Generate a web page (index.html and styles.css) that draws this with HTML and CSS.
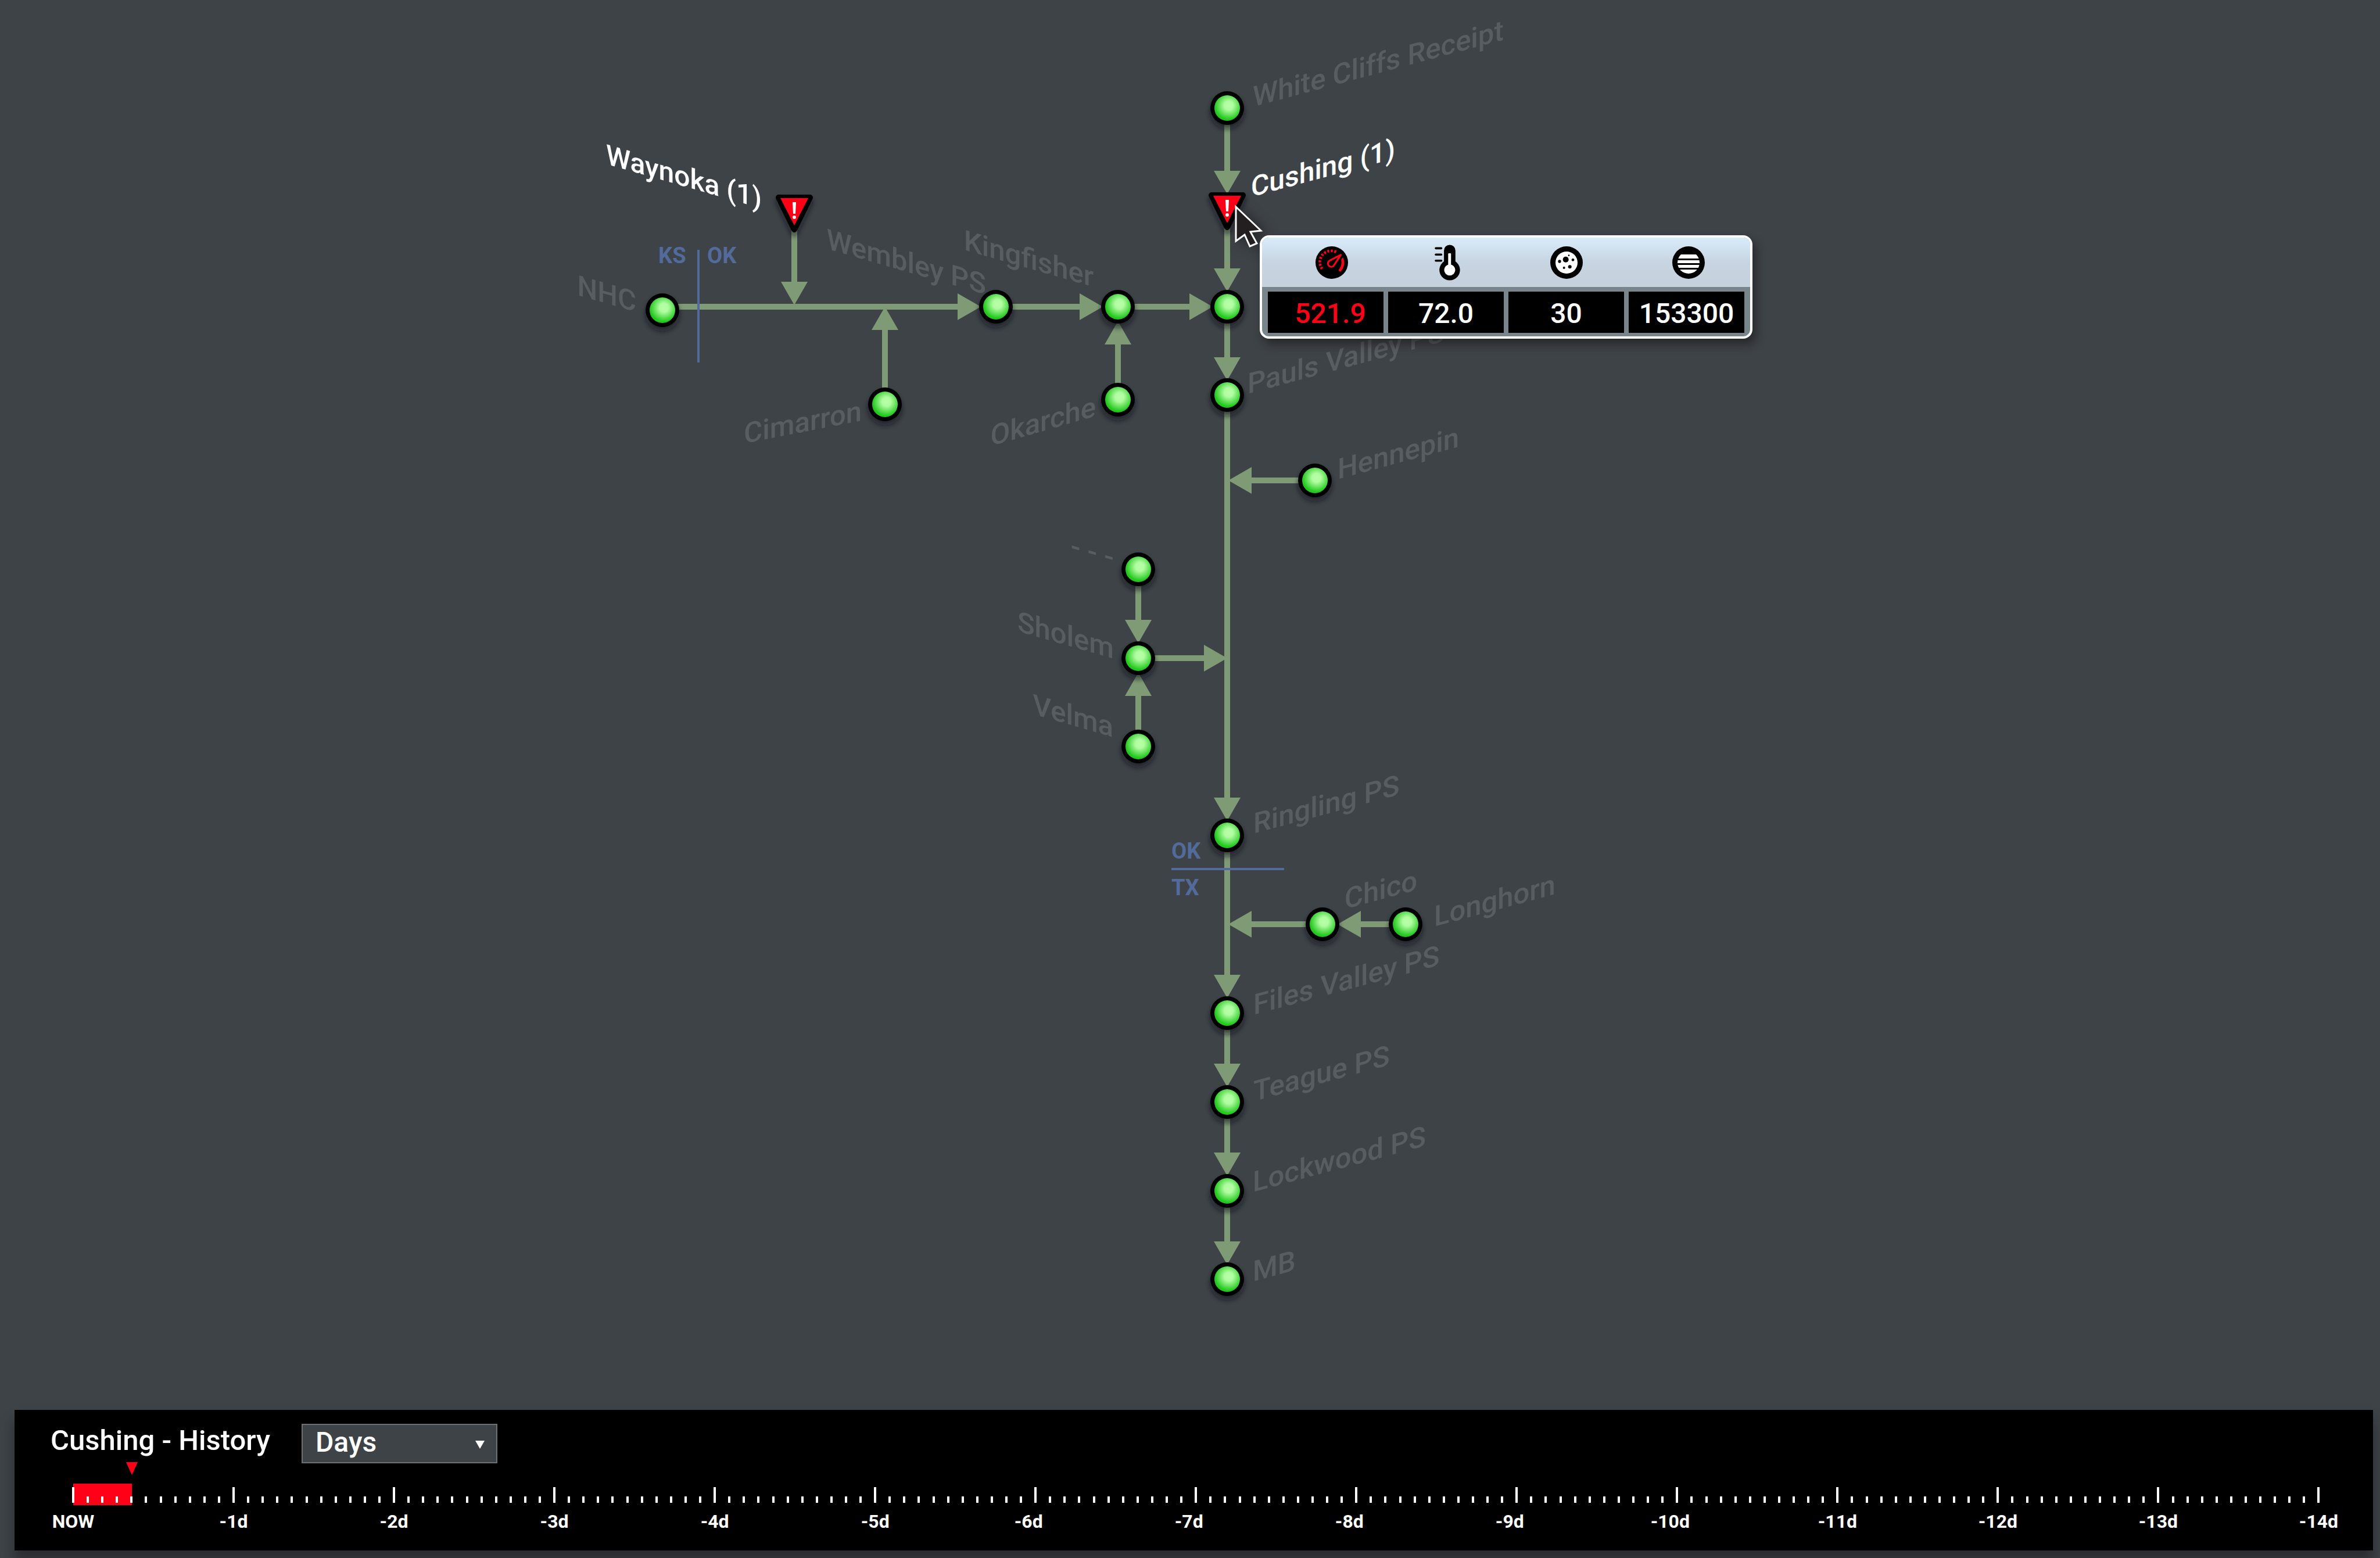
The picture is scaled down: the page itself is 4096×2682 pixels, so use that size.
FILE: index.html
```
<!DOCTYPE html>
<html lang="en">
<head>
<meta charset="utf-8">
<title>Pipeline overview</title>
<link rel="stylesheet" href="styles.css">
</head>
<body>
<main class="stage">
  <svg class="network" viewBox="0 0 4096 2427" role="img" aria-label="Pipeline network">
    <defs>
      <radialGradient id="glow" cx="0.56" cy="0.4" r="0.58">
        <stop offset="0" stop-color="#b8ffa8"/>
        <stop offset="0.3" stop-color="#b0fca0"/>
        <stop offset="0.95" stop-color="#20c81c"/>
      </radialGradient>
      <filter id="shade" x="-50%" y="-50%" width="200%" height="200%">
        <feDropShadow dx="0" dy="7" stdDeviation="5" flood-color="#15131a" flood-opacity="0.65"/>
      </filter>
      <path id="arrow" d="M-23 0H23L0 40Z"/>
      <g id="station" filter="url(#shade)">
        <circle r="29"/>
        <circle r="22" fill="url(#glow)"/>
      </g>
      <g id="alarm" filter="url(#shade)">
        <path class="alarm-edge" d="M-27 5H27L0 60Z"/>
        <path class="alarm-face" d="M-24 6H24L0 53Z"/>
        <path class="alarm-mark" d="M-3 13H3L2 33H-2Z"/>
        <circle class="alarm-mark" cy="39" r="3"/>
      </g>
    </defs>

    <g class="pipes">
      <path d="M2112 186V294M2112 390V462M2112 528V615M2112 680V1373M2112 1438V1678M2112 1744V1831M2112 1897V1984M2112 2050V2137"/>
      <path d="M1140 528H1649M1714 528H1859M1924 528H2048"/>
      <path d="M1367 390V486M1523 696V567M1924 688V592"/>
      <path d="M2263 827H2151M1959 980V1068M1959 1285V1197M1959 1133H2073M2276 1591H2151M2419 1591H2341"/>
    </g>
    <g class="arrows">
      <use href="#arrow" x="2112" y="294"/>
      <use href="#arrow" x="2112" y="462"/>
      <use href="#arrow" x="2112" y="615"/>
      <use href="#arrow" x="2112" y="1373"/>
      <use href="#arrow" x="2112" y="1678"/>
      <use href="#arrow" x="2112" y="1831"/>
      <use href="#arrow" x="2112" y="1984"/>
      <use href="#arrow" x="2112" y="2137"/>
      <use href="#arrow" x="1367" y="485"/>
      <use href="#arrow" x="1959" y="1067"/>
      <use href="#arrow" transform="translate(1648 528) rotate(-90)"/>
      <use href="#arrow" transform="translate(1858 528) rotate(-90)"/>
      <use href="#arrow" transform="translate(2047 528) rotate(-90)"/>
      <use href="#arrow" transform="translate(2072 1133) rotate(-90)"/>
      <use href="#arrow" transform="translate(1523 568) rotate(180)"/>
      <use href="#arrow" transform="translate(1924 593) rotate(180)"/>
      <use href="#arrow" transform="translate(1959 1198) rotate(180)"/>
      <use href="#arrow" transform="translate(2154 827) rotate(90)"/>
      <use href="#arrow" transform="translate(2154 1591) rotate(90)"/>
      <use href="#arrow" transform="translate(2342 1591) rotate(90)"/>
    </g>

    <g class="borders">
      <path d="M1202 430V624M2016 1496H2210"/>
      <text x="1133" y="453">KS</text>
      <text x="1217" y="453">OK</text>
      <text x="2016" y="1478">OK</text>
      <text x="2016" y="1541">TX</text>
    </g>

    <g class="names">
      <text transform="translate(2156 184) skewY(-15)">White Cliffs Receipt</text>
      <text class="active" transform="translate(2153 339) skewY(-15)">Cushing (1)</text>
      <text transform="translate(2147 678) skewY(-15)">Pauls Valley PS</text>
      <text transform="translate(2302 825) skewY(-15)">Hennepin</text>
      <text transform="translate(2157 1435) skewY(-15)">Ringling PS</text>
      <text transform="translate(2314 1565) skewY(-15)">Chico</text>
      <text transform="translate(2468 1595) skewY(-15)">Longhorn</text>
      <text transform="translate(2157 1747) skewY(-15)">Files Valley PS</text>
      <text transform="translate(2157 1896) skewY(-15)">Teague PS</text>
      <text transform="translate(2156 2052) skewY(-15)">Lockwood PS</text>
      <text transform="translate(2156 2206) skewY(-15)">MB</text>
    </g>
    <g class="names names-left">
      <text class="active" transform="translate(1311 359) skewY(16)">Waynoka (1)</text>
      <text transform="translate(1095 537) skewY(16)">NHC</text>
      <text transform="translate(1697 507) skewY(16)">Wembley PS</text>
      <text transform="translate(1882 494) skewY(16)">Kingfisher</text>
      <text transform="translate(1483 724) skewY(-11)">Cimarron</text>
      <text transform="translate(1886 716) skewY(-16)">Okarche</text>
      <text transform="translate(1917 977) skewY(16)">- - -</text>
      <text transform="translate(1917 1134) skewY(16)">Sholem</text>
      <text transform="translate(1916 1269) skewY(16)">Velma</text>
    </g>

    <g>
      <use href="#station" x="2112" y="186"/>
      <use href="#station" x="2112" y="528"/>
      <use href="#station" x="2112" y="680"/>
      <use href="#station" x="2112" y="1438"/>
      <use href="#station" x="2112" y="1744"/>
      <use href="#station" x="2112" y="1897"/>
      <use href="#station" x="2112" y="2050"/>
      <use href="#station" x="2112" y="2202"/>
      <use href="#station" x="1140" y="534"/>
      <use href="#station" x="1714" y="528"/>
      <use href="#station" x="1924" y="528"/>
      <use href="#station" x="1523" y="696"/>
      <use href="#station" x="1924" y="688"/>
      <use href="#station" x="2263" y="827"/>
      <use href="#station" x="1959" y="980"/>
      <use href="#station" x="1959" y="1133"/>
      <use href="#station" x="1959" y="1285"/>
      <use href="#station" x="2276" y="1591"/>
      <use href="#station" x="2419" y="1591"/>
      <use href="#alarm" x="1367" y="335"/>
      <use href="#alarm" x="2112" y="331"/>
    </g>

    <path class="pointer" d="M2127 356L2170 397L2152 399L2163 419L2151 424L2142 404L2127 415Z"/>
  </svg>

  <table class="readings">
    <thead>
      <tr>
        <th scope="col">
          <svg class="icon" viewBox="61 57 168 168" role="img" aria-label="Pressure">
            <circle cx="145" cy="141" r="84"/>
            <path class="dial-ticks" d="M95 173A58 58 0 0 1 172 89"/>
            <path class="dial-needle" d="M192 101L158 152A17 17 0 1 1 134 131Z"/>
            <path class="dial-range" d="M199 117Q203 115 206 121Q217 160 190 189L179 181Q200 156 194 126Z"/>
          </svg>
        </th>
        <th scope="col">
          <svg class="icon icon-tall" viewBox="682 47 134 188" role="img" aria-label="Temperature">
            <path d="M731 78a30 30 0 0 1 60 0v57a54 54 0 1 1-60 0z"/>
            <path class="scale" d="M688 66H717M688 99H717M688 131H717"/>
            <circle class="pale" cx="761" cy="180" r="29"/>
            <rect class="pale" x="753" y="92" width="15" height="70" rx="4"/>
          </svg>
        </th>
        <th scope="col">
          <svg class="icon" viewBox="49 57 168 168" role="img" aria-label="Particles">
            <circle cx="133" cy="141" r="84"/>
            <circle class="pale" cx="133" cy="141" r="57"/>
            <circle cx="129" cy="125" r="15"/>
            <circle cx="97" cy="135" r="8"/>
            <circle cx="166" cy="127" r="7"/>
            <circle cx="145" cy="104" r="4"/>
            <circle cx="150" cy="163" r="9"/>
            <circle cx="120" cy="168" r="6"/>
          </svg>
        </th>
        <th scope="col">
          <svg class="icon" viewBox="691 57 168 168" role="img" aria-label="Volume">
            <clipPath id="tank"><circle cx="775" cy="141" r="57"/></clipPath>
            <circle cx="775" cy="141" r="84"/>
            <path class="pale" clip-path="url(#tank)" d="M715 99h120v21H715zM715 129h120v15H715zM715 153h120v15H715zM715 177h120v24H715z"/>
          </svg>
        </th>
      </tr>
    </thead>
    <tbody>
      <tr>
        <td><span class="value value-alert">521.9</span></td>
        <td><span class="value">72.0</span></td>
        <td><span class="value">30</span></td>
        <td><span class="value">153300</span></td>
      </tr>
    </tbody>
  </table>
</main>

<section class="history">
  <header class="history-head">
    <h1><label for="unit">Cushing - History</label></h1>
    <div class="picker">
      <select id="unit">
        <option>Days</option>
        <option>Hours</option>
        <option>Weeks</option>
      </select>
    </div>
  </header>
  <div class="timeline">
    <div class="range"></div>
    <ol class="ruler" id="ruler"></ol>
  </div>
</section>
<script src="timeline.js"></script>
</body>
</html>
```
FILE: styles.css
```
* {
  box-sizing: border-box;
}

body {
  display: flex;
  flex-direction: column;
  min-height: 100vh;
  margin: 0;
  background: #3e4347;
  color: #fff;
  font-family: Roboto, "Liberation Sans", sans-serif;
  font-weight: 500;
}

/* Network diagram */

.stage {
  position: relative;
  flex: 1;
}

.network {
  display: block;
  width: 100%;
  height: auto;
}

.pipes {
  fill: none;
  stroke: #7f9b75;
  stroke-width: 10px;
}

.arrows {
  fill: #7f9b75;
}

.borders {
  fill: #526b9b;
  font-size: 38px;
  font-weight: 700;
}

.borders path {
  stroke: #526b9b;
  stroke-width: 4px;
}

.names {
  fill: #575d61;
  font-size: 49px;
}

.names-left {
  text-anchor: end;
}

.active {
  fill: #fff;
  font-size: 48px;
}

.alarm-edge {
  stroke: #000;
  stroke-width: 10px;
  stroke-linejoin: round;
}

.alarm-face {
  fill: #ff0016;
}

.alarm-mark {
  fill: #fff;
}

.pointer {
  fill: #231f20;
  stroke: #fff;
  stroke-width: 3px;
  filter: drop-shadow(8px 4px 10px rgba(20, 18, 24, 0.6));
}

/* Station readings */

.readings {
  position: absolute;
  left: 52.93%;
  top: 16.69%;
  overflow: hidden;
  border: 4px solid #fff;
  border-radius: 16px;
  border-spacing: 0;
  background: #78868b;
  box-shadow: 6px 10px 16px rgba(20, 18, 24, 0.55);
}

.readings thead {
  background: linear-gradient(#d9ecfa, #c7d4e1 50%, #c5d1dc);
}

.readings th {
  height: 85px;
  padding: 0;
  vertical-align: middle;
}

.readings th:first-child {
  padding-left: 26px;
}

.readings th:nth-child(2) {
  padding-left: 4px;
}

.readings td {
  padding: 8px 4px 6px;
}

.readings td:first-child {
  padding-left: 10px;
}

.readings td:last-child {
  padding-right: 10px;
}

.value {
  display: block;
  width: 199px;
  padding-top: 5px;
  background: #000;
  font-size: 48px;
  line-height: 66px;
  text-align: center;
}

.value-alert {
  padding-left: 16px;
  color: #ff0016;
}

.icon {
  display: block;
  width: 56px;
  height: 56px;
  margin: 0 auto;
}

.icon-tall {
  width: 44px;
  height: 62px;
}

.pale {
  fill: #fff;
}

.scale {
  stroke: #000;
  stroke-width: 11px;
  stroke-linecap: round;
}

.dial-ticks {
  fill: none;
  stroke: #ff0016;
  stroke-width: 14px;
  stroke-dasharray: 10 8;
}

.dial-needle {
  fill: none;
  stroke: #ff0016;
  stroke-width: 9px;
  stroke-linejoin: round;
}

.dial-range {
  fill: #ff0016;
}

/* History timeline */

.history {
  margin: 0 12px 13px 25px;
  padding: 24px 91px 30px 62px;
  background: #000;
  box-shadow: 0 20px 20px rgba(24, 22, 28, 0.5);
}

.history-head {
  display: flex;
  align-items: flex-start;
  gap: 54px;
}

h1 {
  margin: 0;
  font-size: 49px;
  font-weight: 500;
  line-height: 58px;
}

.picker {
  position: relative;
}

.picker::after {
  content: "";
  position: absolute;
  right: 22px;
  top: 29px;
  border: 8px solid transparent;
  border-top: 14px solid #fff;
  border-bottom: 0;
  pointer-events: none;
}

.picker select {
  width: 337px;
  height: 68px;
  padding: 0 22px 6px;
  appearance: none;
  border: 2px solid #6f7072;
  border-radius: 0;
  background: #3e4347;
  color: inherit;
  font: inherit;
  font-size: 48px;
}

.timeline {
  position: relative;
  margin: 35px 0 0 37px;
  padding-top: 6px;
}

.range {
  position: absolute;
  left: 2px;
  top: 0;
  width: 2.6%;
  height: 37px;
  background: #ff0016;
}

.range::after {
  content: "";
  position: absolute;
  right: -10px;
  top: -37px;
  border: 10px solid transparent;
  border-top: 22px solid #ff0016;
  border-bottom: 0;
}

.ruler {
  position: relative;
  display: flex;
  justify-content: space-between;
  margin: 0;
  padding: 0;
  list-style: none;
}

.tick {
  width: 4px;
  height: 11px;
  margin-top: 16px;
  background: #fff;
}

.day {
  display: flex;
  flex-direction: column;
  align-items: center;
  gap: 12px;
  width: 4px;
  font-size: 32px;
  font-weight: 700;
  line-height: 40px;
  white-space: nowrap;
}

.day::before {
  content: "";
  width: 4px;
  height: 27px;
  background: #fff;
}

.day-mid span {
  padding-right: 24px;
}
```
FILE: timeline.js
```
const DAYS = 14;
const STEPS = 11;
const ruler = document.getElementById("ruler");

for (let i = 0; i <= DAYS * STEPS; i++) {
  const item = document.createElement("li");
  if (i % STEPS === 0) {
    const day = i / STEPS;
    const text = document.createElement("span");
    text.textContent = day === 0 ? "NOW" : "-" + day + "d";
    item.className = day >= 6 && day <= 10 ? "day day-mid" : "day";
    item.append(text);
  } else {
    item.className = "tick";
    item.setAttribute("aria-hidden", "true");
  }
  ruler.append(item);
}
```
